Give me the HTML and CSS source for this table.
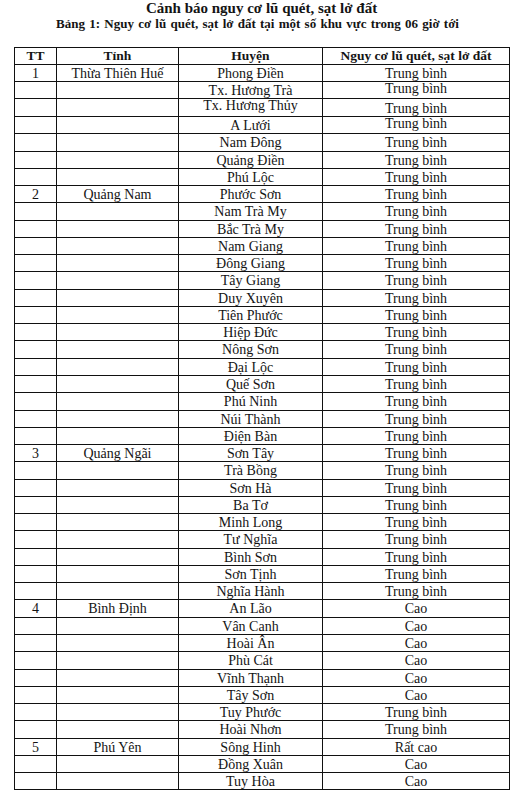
FILE: index.html
```html
<!DOCTYPE html>
<html lang="vi">
<head>
<meta charset="utf-8">
<title>Cảnh báo nguy cơ lũ quét, sạt lở đất</title>
<link rel="stylesheet" href="styles.css">
</head>
<body>
<div class="page">
  <div class="heading">
    <div class="title">Cảnh báo nguy cơ lũ quét, sạt lở đất</div>
    <div class="subtitle">Bảng 1: Nguy cơ lũ quét, sạt lở đất tại một số khu vực trong 06 giờ tới</div>
  </div>
  <table class="risk">
    <colgroup>
      <col class="c1"><col class="c2"><col class="c3"><col class="c4">
    </colgroup>
    <thead>
      <tr><th>TT</th><th>Tỉnh</th><th>Huyện</th><th>Nguy cơ lũ quét, sạt lở đất</th></tr>
    </thead>
    <tbody>
      <tr><td>1</td><td>Thừa Thiên Huế</td><td>Phong Điền</td><td>Trung bình</td></tr>
      <tr><td></td><td></td><td>Tx. Hương Trà</td><td class="up">Trung bình</td></tr>
      <tr><td></td><td></td><td class="up">Tx. Hương Thủy</td><td class="down">Trung bình</td></tr>
      <tr><td></td><td></td><td>A Lưới</td><td class="up">Trung bình</td></tr>
      <tr><td></td><td></td><td>Nam Đông</td><td>Trung bình</td></tr>
      <tr><td></td><td></td><td>Quảng Điền</td><td>Trung bình</td></tr>
      <tr><td></td><td></td><td>Phú Lộc</td><td>Trung bình</td></tr>
      <tr><td>2</td><td>Quảng Nam</td><td>Phước Sơn</td><td>Trung bình</td></tr>
      <tr><td></td><td></td><td>Nam Trà My</td><td>Trung bình</td></tr>
      <tr><td></td><td></td><td>Bắc Trà My</td><td>Trung bình</td></tr>
      <tr><td></td><td></td><td>Nam Giang</td><td>Trung bình</td></tr>
      <tr><td></td><td></td><td>Đông Giang</td><td>Trung bình</td></tr>
      <tr><td></td><td></td><td>Tây Giang</td><td>Trung bình</td></tr>
      <tr><td></td><td></td><td>Duy Xuyên</td><td>Trung bình</td></tr>
      <tr><td></td><td></td><td>Tiên Phước</td><td>Trung bình</td></tr>
      <tr><td></td><td></td><td>Hiệp Đức</td><td>Trung bình</td></tr>
      <tr><td></td><td></td><td>Nông Sơn</td><td>Trung bình</td></tr>
      <tr><td></td><td></td><td>Đại Lộc</td><td>Trung bình</td></tr>
      <tr><td></td><td></td><td>Quế Sơn</td><td>Trung bình</td></tr>
      <tr><td></td><td></td><td>Phú Ninh</td><td>Trung bình</td></tr>
      <tr><td></td><td></td><td>Núi Thành</td><td>Trung bình</td></tr>
      <tr><td></td><td></td><td>Điện Bàn</td><td>Trung bình</td></tr>
      <tr><td>3</td><td>Quảng Ngãi</td><td>Sơn Tây</td><td>Trung bình</td></tr>
      <tr><td></td><td></td><td>Trà Bồng</td><td>Trung bình</td></tr>
      <tr><td></td><td></td><td>Sơn Hà</td><td>Trung bình</td></tr>
      <tr><td></td><td></td><td>Ba Tơ</td><td>Trung bình</td></tr>
      <tr><td></td><td></td><td>Minh Long</td><td>Trung bình</td></tr>
      <tr><td></td><td></td><td>Tư Nghĩa</td><td>Trung bình</td></tr>
      <tr><td></td><td></td><td>Bình Sơn</td><td>Trung bình</td></tr>
      <tr><td></td><td></td><td>Sơn Tịnh</td><td>Trung bình</td></tr>
      <tr><td></td><td></td><td>Nghĩa Hành</td><td>Trung bình</td></tr>
      <tr><td>4</td><td>Bình Định</td><td>An Lão</td><td>Cao</td></tr>
      <tr><td></td><td></td><td>Vân Canh</td><td>Cao</td></tr>
      <tr><td></td><td></td><td>Hoài Ân</td><td>Cao</td></tr>
      <tr><td></td><td></td><td>Phù Cát</td><td>Cao</td></tr>
      <tr><td></td><td></td><td>Vĩnh Thạnh</td><td>Cao</td></tr>
      <tr><td></td><td></td><td>Tây Sơn</td><td>Cao</td></tr>
      <tr><td></td><td></td><td>Tuy Phước</td><td>Trung bình</td></tr>
      <tr><td></td><td></td><td>Hoài Nhơn</td><td>Trung bình</td></tr>
      <tr><td>5</td><td>Phú Yên</td><td>Sông Hinh</td><td>Rất cao</td></tr>
      <tr><td></td><td></td><td>Đồng Xuân</td><td>Cao</td></tr>
      <tr><td></td><td></td><td>Tuy Hòa</td><td>Cao</td></tr>
    </tbody>
  </table>
</div>
</body>
</html>
```

FILE: styles.css
```css
html, body {
  margin: 0;
  padding: 0;
  background: #ffffff;
}

body {
  font-family: "Liberation Serif", "Times New Roman", serif;
  color: #141414;
}

.page {
  width: 514px;
  padding-top: 1px;
}

.heading {
  text-align: center;
  font-weight: bold;
}

.title {
  font-size: 15px;
  line-height: 15px;
  padding-left: 9px;
}

.subtitle {
  font-size: 13px;
  line-height: 15px;
  padding-left: 1px;
  word-spacing: 1px;
}

.risk {
  margin: 16px 0 0 14px;
  width: 496px;
  border-collapse: collapse;
  table-layout: fixed;
  font-size: 14px;
}

.c1 { width: 42px; }
.c2 { width: 122px; }
.c3 { width: 144px; }
.c4 { width: 187px; }

.risk tr {
  height: 17.28px;
}

.risk thead tr {
  height: 16.5px;
}

.risk th,
.risk td {
  border: 1px solid #111;
  padding: 2px 0 0;
  text-align: center;
  vertical-align: top;
  white-space: nowrap;
  overflow: hidden;
  line-height: 14px;
}

.risk th {
  padding-top: 1px;
  font-size: 13.5px;
  font-weight: bold;
}

.risk td.up {
  padding-top: 0;
}

.risk td.down {
  padding-top: 3px;
}
```
